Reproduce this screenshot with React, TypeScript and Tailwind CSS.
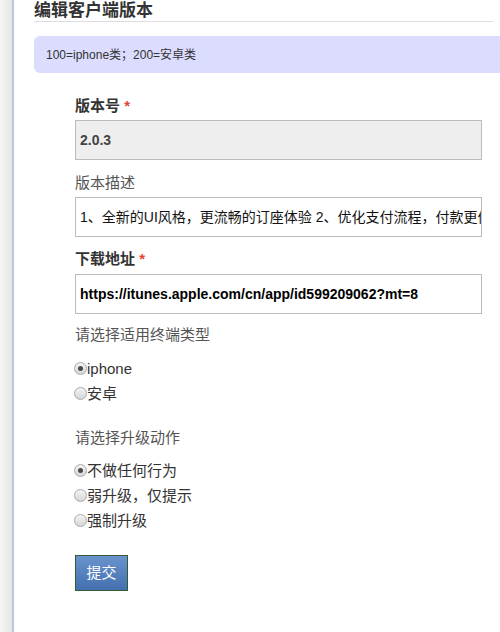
import React from "react";

const font = { fontFamily: '"Liberation Sans", Arial, "Noto Sans CJK SC", sans-serif' };

function Radio({ checked, label }: { checked?: boolean; label: string }) {
  return (
    <div className="flex h-[25px] items-center">
      <span className="relative -ml-[1px] flex h-[13px] w-[13px] items-center justify-center rounded-full border border-[#a9a9a9] bg-gradient-to-b from-[#f4f4f4] to-[#d6d6d6]">
        {checked && <span className="h-[5px] w-[5px] rounded-full bg-[#4a4a4a]" />}
      </span>
      <span className="text-[15px] leading-[20px] text-[#333]">{label}</span>
    </div>
  );
}

export default function App() {
  return (
    <div style={font} className="flex min-h-[632px] w-[500px] overflow-hidden bg-white">
      <div className="w-[12px] shrink-0 bg-gradient-to-r from-[#f6f6f6] to-[#e4e4e4]" />
      <div className="w-[2px] shrink-0 bg-[#b7c9df]" />
      <div className="min-w-0 flex-1 pl-[20px]">
        <div className="mr-[7px] h-[22px] border-b border-[#dddddd] text-[17px] font-bold leading-[21px] text-[#333]">
          编辑客户端版本
        </div>
        <div className="mt-[14px] flex h-[37px] items-center rounded-l-[6px] bg-[#dcdcff] pl-[12px] text-[12px] text-[#333]">
          100=iphone类；200=安卓类
        </div>
        <div className="pl-[41px] pr-[18px]">
          <div className="mt-[23px] h-[20px] text-[15px] font-bold leading-[20px] text-[#333]">
            版本号 <span className="text-[#e0453a]">*</span>
          </div>
          <div className="mt-[4px] flex h-[40px] items-center border border-[#bbbbbb] bg-[#eeeeee] pl-[4px] text-[14px] font-bold text-[#444]">
            2.0.3
          </div>
          <div className="mt-[13px] h-[20px] text-[15px] leading-[20px] text-[#555]">版本描述</div>
          <div className="mt-[4px] flex h-[40px] items-center overflow-hidden whitespace-nowrap border border-[#bbbbbb] bg-white pl-[4px] text-[14px] text-[#111]">
            1、全新的UI风格，更流畅的订座体验 2、优化支付流程，付款更便捷
          </div>
          <div className="mt-[12px] h-[20px] text-[15px] font-bold leading-[20px] text-[#333]">
            下载地址 <span className="text-[#e0453a]">*</span>
          </div>
          <div className="mt-[5px] flex h-[40px] items-center overflow-hidden whitespace-nowrap border border-[#bbbbbb] bg-white pl-[4px] text-[14px] font-bold text-black">
            https://itunes.apple.com/cn/app/id599209062?mt=8
          </div>
          <div className="mt-[11px] h-[20px] text-[15px] leading-[20px] text-[#555]">请选择适用终端类型</div>
          <div className="mt-[11px]">
            <Radio checked label="iphone" />
            <Radio label="安卓" />
          </div>
          <div className="mt-[22px] h-[20px] text-[15px] leading-[20px] text-[#555]">请选择升级动作</div>
          <div className="mt-[10px]">
            <Radio checked label="不做任何行为" />
            <Radio label="弱升级，仅提示" />
            <Radio label="强制升级" />
          </div>
          <button className="mt-[22px] flex h-[36px] w-[53px] items-center justify-center border border-[#335c33] bg-gradient-to-b from-[#6a93cd] to-[#4470af] text-[15px] text-white">
            提交
          </button>
        </div>
      </div>
    </div>
  );
}
